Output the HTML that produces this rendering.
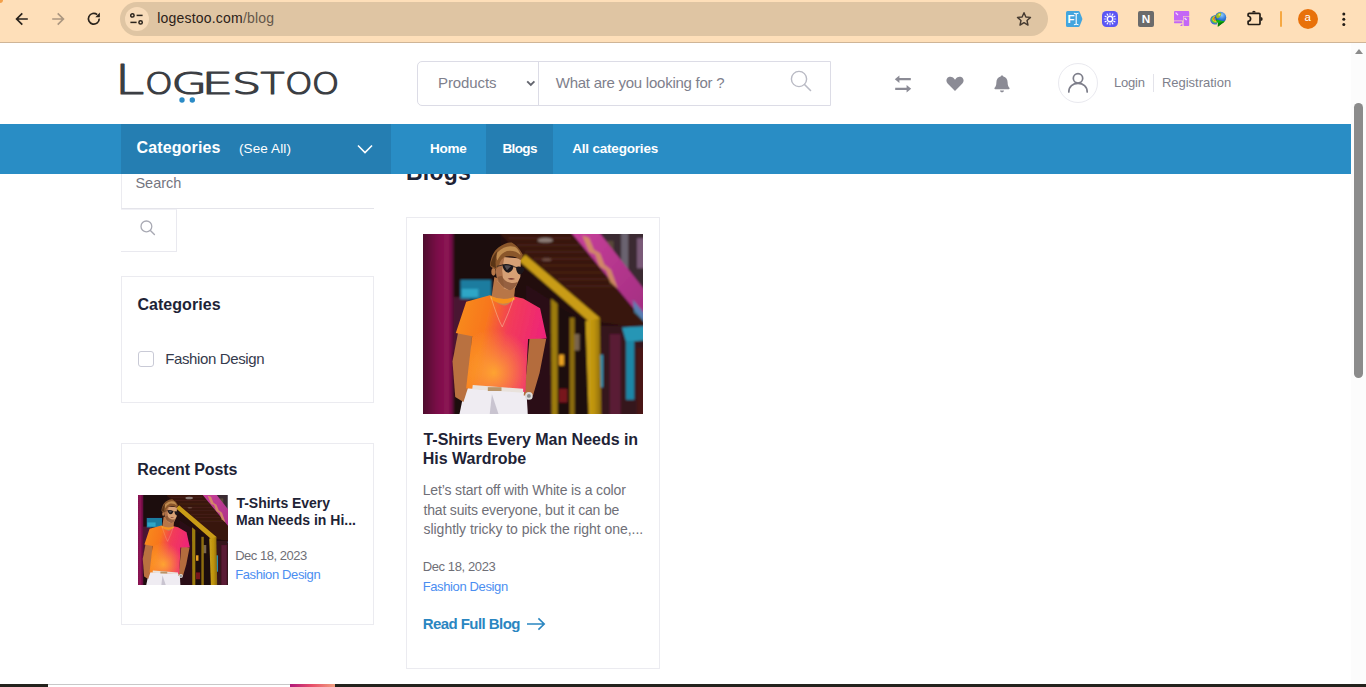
<!DOCTYPE html>
<html lang="en">
<head>
<meta charset="utf-8">
<title>Blogs - Logestoo</title>
<style>
*{box-sizing:border-box;margin:0;padding:0}
html,body{width:1366px;height:687px;overflow:hidden;background:#fff}
body{font-family:"Liberation Sans",sans-serif;color:#1e2336;position:relative}
svg{display:block;position:absolute;overflow:hidden}
.t{position:absolute;white-space:nowrap;line-height:1}
/* browser chrome */
#chrome{position:absolute;left:0;top:0;width:1366px;height:43px;background:#fedfb9;border-bottom:1px solid #cfb597}
#pill{position:absolute;left:120px;top:2px;width:928px;height:34px;border-radius:17px;background:#dfc5a3}
#pill .ic{position:absolute;left:5px;top:5px;width:24px;height:24px;border-radius:12px;background:#f8dcba}
#url{left:37px;top:9px;font-size:14px;color:#2b2118}
#url span{color:#65574a}
/* page */
#page{position:absolute;left:0;top:43px;width:1351px;height:641px;background:#fff;overflow:hidden}
#sb{position:absolute;left:1351px;top:43px;width:15px;height:641px;background:#fcfcfc}
#sb .th{position:absolute;left:3px;top:60px;width:9px;height:275px;border-radius:5px;background:#8b8b8b}
#sb .up{position:absolute;left:3.5px;top:6px;width:0;height:0;border-left:4.5px solid transparent;border-right:4.5px solid transparent;border-bottom:5px solid #8b8b8b}
/* header */
#sbox{position:absolute;left:417px;top:18px;width:414px;height:45px;border:1px solid #dcdce6;border-radius:5px 0 0 5px}
#sbox .dv{position:absolute;left:120px;top:0;width:1px;height:43px;background:#dcdce6}
.g{color:#7e808c}
#ucirc{position:absolute;left:1058px;top:20px;width:40px;height:40px;border-radius:20px;border:1px solid #e9e9ef}
/* nav */
#nav{position:absolute;left:0;top:81px;width:1351px;height:50px;background:#298dc5}
#nav .cat{position:absolute;left:121px;top:0;width:270px;height:50px;background:#257eb2}
#nav .act{position:absolute;left:486px;top:0;width:67px;height:50px;background:#257eb2}
#nav .t{color:#fff;font-weight:bold}
/* content */
.card{position:absolute;border:1px solid #ebebf0;background:#fff}
.h{font-weight:bold;color:#1e2336}
.blue{color:#4b8ef1}
.dt{color:#6f6f77}
/*FIT*/
#n1{left:136.48px;top:15.86px;font-size:16px;letter-spacing:0.140px}
#n2{left:238.98px;top:17.97px;font-size:13.5px;letter-spacing:0.113px}
#n3{left:429.96px;top:17.67px;font-size:13.5px;letter-spacing:-0.240px}
#n4{left:502.50px;top:17.67px;font-size:13.5px;letter-spacing:-0.630px}
#n5{left:572.22px;top:17.67px;font-size:13.5px;letter-spacing:-0.194px}
#h1{left:19.96px;top:13.10px;font-size:15px;letter-spacing:-0.077px}
#h2{left:137.78px;top:13.10px;font-size:15px;letter-spacing:-0.252px}
#h3{left:1113.98px;top:33.30px;font-size:13px;letter-spacing:-0.180px}
#h4{left:1161.94px;top:33.30px;font-size:13px;letter-spacing:-0.016px}
#c0{left:406.00px;top:118.23px;font-size:23px;letter-spacing:0.200px}
#c1{left:135.46px;top:132.63px;font-size:14.5px;letter-spacing:0.000px}
#c2{left:137.48px;top:253.86px;font-size:16px;letter-spacing:0.040px}
#c3{left:165.20px;top:308.10px;font-size:15px;letter-spacing:-0.374px}
#c4{left:137.20px;top:418.86px;font-size:16px;letter-spacing:-0.098px}
#c5{left:236.54px;top:453.15px;font-size:14px;letter-spacing:-0.055px}
#c6{left:236.00px;top:469.95px;font-size:14px;letter-spacing:0.011px}
#c7{left:235.20px;top:506.20px;font-size:13px;letter-spacing:-0.491px}
#c8{left:235.20px;top:524.60px;font-size:13px;letter-spacing:-0.374px}
#c9{left:423.50px;top:388.66px;font-size:16px;letter-spacing:-0.021px}
#c10{left:422.70px;top:407.66px;font-size:16px;letter-spacing:0.000px}
#c11{left:422.70px;top:439.75px;font-size:14px;letter-spacing:-0.135px}
#c12{left:423.50px;top:459.65px;font-size:14px;letter-spacing:-0.175px}
#c13{left:423.50px;top:478.85px;font-size:14px;letter-spacing:-0.032px}
#c14{left:422.70px;top:517.10px;font-size:13px;letter-spacing:-0.393px}
#c15{left:422.70px;top:537.30px;font-size:13px;letter-spacing:-0.374px}
#c16{left:422.70px;top:573.40px;font-size:15px;letter-spacing:-0.554px}
#url{left:37.22px;top:9.15px;font-size:14px;letter-spacing:0.203px}
/*ENDFIT*/
#bottom{position:absolute;left:0;top:684px;width:1366px;height:3px;background:#23231d}
</style>
</head>
<body>
<svg width="0" height="0" style="left:0;top:0"><defs>
  <linearGradient id="pg1" x1="0" x2="1" y1="0" y2="0"><stop offset="0" stop-color="#3f0724"/><stop offset=".55" stop-color="#7c0f49"/><stop offset=".85" stop-color="#8d1355"/><stop offset="1" stop-color="#5a0a36"/></linearGradient>
  <linearGradient id="pg2" x1="0" x2="1" y1="0" y2="0.25"><stop offset="0" stop-color="#f78f1e"/><stop offset=".38" stop-color="#f8761f"/><stop offset=".62" stop-color="#f23c58"/><stop offset="1" stop-color="#ee2478"/></linearGradient>
  <radialGradient id="pg3" cx=".42" cy=".8" r=".45"><stop offset="0" stop-color="#ffae2e" stop-opacity=".9"/><stop offset="1" stop-color="#ffae2e" stop-opacity="0"/></radialGradient>
  <linearGradient id="pg4" x1="0" x2="1" y1="0" y2="1"><stop offset="0" stop-color="#c8409a"/><stop offset="1" stop-color="#a02c80"/></linearGradient>
  <linearGradient id="pg5" x1="0" x2="1" y1="0" y2="0"><stop offset="0" stop-color="#cda414"/><stop offset=".55" stop-color="#bd9210"/><stop offset="1" stop-color="#8a6a0a"/></linearGradient>
  <filter id="pb" x="-5%" y="-5%" width="110%" height="110%"><feGaussianBlur stdDeviation="2.2"/></filter>
  <filter id="pb2" x="-5%" y="-5%" width="110%" height="110%"><feGaussianBlur stdDeviation="3"/></filter>
  <filter id="pb3" x="-5%" y="-5%" width="110%" height="110%"><feGaussianBlur stdDeviation="4.5"/></filter>
  <clipPath id="pc"><rect x="0" y="0" width="220" height="180"/></clipPath>
  <g id="photo" clip-path="url(#pc)"><rect x="0" y="0" width="220" height="180" fill="#23090f"/>
  <g transform="scale(0.27382) translate(-18.3,-14.6)" filter="url(#pb3)">
    <rect x="-40" y="-40" width="920" height="770" fill="#23090f"/>
    <!-- upper right building -->
    <polygon points="640,0 840,0 840,260" fill="#3b2a33"/>
    <rect x="742" y="10" width="26" height="175" fill="#6a6470"/><rect x="690" y="40" width="24" height="60" fill="#5a4a38"/><rect x="800" y="30" width="30" height="110" fill="#7a5a78"/>
    <!-- soffit -->
    <polygon points="285,0 565,0 840,330 840,360 650,335 385,100" fill="#37170f"/>
    <g stroke="#55281a" stroke-width="5" opacity=".8"><path d="M330 30 L560 30"/><path d="M360 55 L590 55"/><path d="M390 80 L610 80"/><path d="M420 105 L635 105"/><path d="M450 130 L655 130"/><path d="M480 155 L680 155"/><path d="M510 180 L700 180"/><path d="M540 205 L720 205"/></g>
    <ellipse cx="465" cy="37" rx="28" ry="9" fill="#8a7a74"/><ellipse cx="470" cy="108" rx="18" ry="6" fill="#6a4a40"/>
    <!-- pink fascia -->
    <polygon points="552,0 655,0 840,235 840,350" fill="url(#pg4)"/>
    <g fill="#d9a05a" opacity=".75"><polygon points="600,20 625,28 650,90 625,80"/><polygon points="640,70 665,85 690,150 662,132"/><polygon points="680,125 705,145 730,215 702,192"/></g>
    <polygon points="785,255 840,320 840,350 790,300" fill="#3aa0c8" opacity=".7"/>
    <!-- far right -->
    <rect x="668" y="350" width="172" height="340" fill="#35121c"/>
    <rect x="700" y="380" width="40" height="300" fill="#5a1a34"/>
    <polygon points="745,356 840,350 840,402 760,408" fill="#2596b5"/>
    <rect x="760" y="405" width="30" height="215" fill="#1f86a6"/><rect x="662" y="455" width="14" height="120" fill="#2a8eb0"/>
    <rect x="800" y="430" width="40" height="250" fill="#4a1418"/>
    <!-- interior glass -->
    <polygon points="395,200 490,260 490,690 395,690" fill="#2a0c14"/>
    <polygon points="512,280 615,335 620,690 512,690" fill="#1c0d0e"/>
    <rect x="560" y="380" width="30" height="60" fill="#b8a07a" opacity=".6"/><rect x="515" y="455" width="18" height="40" fill="#e8a020"/><rect x="515" y="580" width="30" height="50" fill="#a01a20" opacity=".7"/>
    <!-- yellow frame -->
    <polygon points="368,112 392,90 665,322 640,348" fill="#c99c14"/>
    <polygon points="612,332 664,322 670,690 624,690" fill="url(#pg5)"/>
    <polygon points="486,250 510,270 510,690 488,690" fill="#9c7c10"/>
    <rect x="554" y="320" width="18" height="370" fill="#8c6c0c"/>
    <!-- left pillar and dark gap -->
    <rect x="128" y="0" width="175" height="690" fill="#1d0810"/>
    <rect x="128" y="245" width="60" height="200" fill="#4a1830"/>
    <rect x="155" y="182" width="112" height="70" fill="#1c7c9f"/><rect x="160" y="215" width="60" height="30" fill="#2fa6c6"/>
    <rect x="0" y="0" width="130" height="690" fill="url(#pg1)"/>
  </g>
  <g transform="scale(0.27382) translate(-18.3,-14.6)" filter="url(#pb)">
    <!-- pants -->
    <polygon points="172,572 396,586 402,690 148,690" fill="#efecf2"/>
    <polygon points="270,600 300,690 260,690" fill="#c9c4d0"/>
    <!-- arms -->
    <polygon points="148,365 198,378 188,560 166,628 136,610 126,480" fill="#b9713f"/>
    <polygon points="408,388 468,398 444,522 420,604 386,604 398,500" fill="#b46c3d"/>
    <!-- shirt -->
    <path d="M262 238 L176 262 L138 376 L198 388 L176 578 L392 592 L402 398 L470 396 L446 286 L384 250 L352 243 L300 250 Z" fill="url(#pg2)"/>
    <path d="M262 238 L176 262 L138 376 L198 388 L176 578 L392 592 L402 398 L470 396 L446 286 L384 250 L352 243 L300 250 Z" fill="url(#pg3)"/>
    <polygon points="200,566 384,580 384,594 198,582" fill="#e9e2dc"/><rect x="255" y="574" width="50" height="14" fill="#b89468"/>
    <circle cx="405" cy="606" r="14" fill="#dcdcdc"/><circle cx="405" cy="606" r="7" fill="#8a8a8a"/>
  </g>
  <g transform="translate(47,2) scale(0.13678)" filter="url(#pb2)">
    <path d="M178 300 L158 445 Q235 520 322 452 L332 360 Z" fill="#b87646"/>
    <path d="M158 445 Q235 470 322 452 Q280 520 235 505 Q190 495 158 445 Z" fill="#c98252"/>
    <path d="M150 436 Q235 480 322 446 L330 462 Q240 530 146 456 Z" fill="#f7931e"/>
    <path d="M152 442 Q200 600 236 664 Q285 560 320 452" fill="none" stroke="#f3e3bd" stroke-width="4" opacity=".75"/>
    <path d="M205 150 L372 165 L368 300 L332 376 L290 398 L248 384 L200 330 L188 235 Z" fill="#d7a074"/>
    <path d="M205 150 L250 160 L235 250 L250 384 L200 330 L188 235 Z" fill="#ad7048"/>
    <path d="M200 300 Q215 370 290 398 Q335 385 350 335 Q320 350 290 340 Q250 330 232 290 Z" fill="#8a5636" opacity=".85"/>
    <path d="M275 312 Q300 300 330 314 Q300 326 275 312 Z" fill="#7a3a30"/>
    <ellipse cx="172" cy="262" rx="16" ry="28" fill="#b87848"/>
    <path d="M146 218 Q150 130 210 82 Q270 40 305 48 Q350 70 386 136 Q378 172 368 176 Q330 140 262 150 Q222 168 214 210 Q200 240 190 240 Q160 240 146 218 Z" fill="#8a572c"/>
    <path d="M200 120 Q260 60 330 80 Q360 100 370 140 Q330 100 270 110 Q220 130 200 180 Q190 150 200 120 Z" fill="#c08c50"/>
    <path d="M150 215 Q160 150 200 110 Q180 170 190 235 Z" fill="#5a3418"/>
    <path d="M236 208 Q280 200 318 218 Q316 262 280 268 Q244 262 236 208 Z" fill="#1c161a"/>
    <path d="M336 226 Q370 218 398 236 Q394 276 364 282 Q338 272 336 226 Z" fill="#1c161a"/>
    <path d="M196 222 L240 212 M316 222 L338 230" stroke="#3a2a22" stroke-width="7"/>
    <path d="M250 216 Q280 210 300 222 L270 250 Z" fill="#6a6266" opacity=".7"/>
  </g>
  </g>
  </defs></svg>
<div id="page">
  <div class="t h" id="c0">Blogs</div>
  <!-- sidebar search -->
  <div style="position:absolute;left:121px;top:131px;width:253px;height:35px;border-left:1px solid #ebebf0;border-bottom:1px solid #e4e4ea"></div>
  <div class="t" id="c1" style="color:#74757f">Search</div>
  <div style="position:absolute;left:121px;top:166px;width:56px;height:43px;border-top:1px solid #f1f1f6;border-right:1px solid #e9e9ef;border-bottom:1px solid #e9e9ef"></div>
  <svg style="left:139px;top:176.2px" width="18" height="18" viewBox="0 0 18 18"><circle cx="7.4" cy="7.4" r="5.4" fill="none" stroke="#a9aab4" stroke-width="1.3"/><path d="M11.4 11.4 L15.4 15.4" stroke="#a9aab4" stroke-width="1.4" stroke-linecap="round"/></svg>
  <!-- categories card -->
  <div class="card" style="left:121px;top:233px;width:253px;height:127px"></div>
  <div class="t h" id="c2">Categories</div>
  <div style="position:absolute;left:138px;top:308px;width:16px;height:16px;border:1px solid #c9cad6;border-radius:3px"></div>
  <div class="t" id="c3" style="color:#353a4c">Fashion Design</div>
  <!-- recent posts card -->
  <div class="card" style="left:121px;top:400px;width:253px;height:182px"></div>
  <div class="t h" id="c4">Recent Posts</div>
  <svg style="left:138px;top:452px" width="90" height="90" viewBox="20 0 180 180"><use href="#photo"/></svg>
  <div class="t h" id="c5">T-Shirts Every</div>
  <div class="t h" id="c6">Man Needs in Hi...</div>
  <div class="t dt" id="c7">Dec 18, 2023</div>
  <div class="t blue" id="c8">Fashion Design</div>
  <!-- blog card -->
  <div class="card" style="left:406px;top:174px;width:254px;height:452px"></div>
  <svg style="left:423px;top:191px" width="220" height="180" viewBox="0 0 220 180"><use href="#photo"/></svg>
  <div class="t h" id="c9">T-Shirts Every Man Needs in</div>
  <div class="t h" id="c10">His Wardrobe</div>
  <div class="t dt" id="c11">Let’s start off with White is a color</div>
  <div class="t dt" id="c12">that suits everyone, but it can be</div>
  <div class="t dt" id="c13">slightly tricky to pick the right one,...</div>
  <div class="t dt" id="c14">Dec 18, 2023</div>
  <div class="t blue" id="c15">Fashion Design</div>
  <div class="t" id="c16" style="font-weight:bold;color:#2a86c1">Read Full Blog</div>
  <svg style="left:526px;top:574px" width="20" height="14" viewBox="0 0 20 14"><path d="M1 7 L18.2 7 M12.4 1.4 L18.2 7 L12.4 12.6" fill="none" stroke="#2a86c1" stroke-width="1.6"/></svg>
  <svg id="logo" style="left:115px;top:12px" width="230" height="56" viewBox="115 55 230 56">
    <text font-family="'DejaVu Sans','Liberation Sans',sans-serif" font-weight="200" fill="#3b3e43" stroke="#3b3e43" stroke-width="1.2" stroke-linejoin="round" y="94.4"><tspan x="114.8" font-size="41.6" textLength="29.6" lengthAdjust="spacingAndGlyphs">L</tspan><tspan x="145" font-size="30.4" textLength="27.8" lengthAdjust="spacingAndGlyphs">O</tspan><tspan x="171.5" font-size="30.4" textLength="35.6" lengthAdjust="spacingAndGlyphs">G</tspan><tspan x="201.4" font-size="30.4" textLength="31.7" lengthAdjust="spacingAndGlyphs">E</tspan><tspan x="231.9" font-size="30.4" textLength="29.3" lengthAdjust="spacingAndGlyphs">S</tspan><tspan x="260.4" font-size="30.4" textLength="24" lengthAdjust="spacingAndGlyphs">T</tspan><tspan x="285" font-size="30.4" textLength="27.6" lengthAdjust="spacingAndGlyphs">O</tspan><tspan x="311.8" font-size="30.4" textLength="27.6" lengthAdjust="spacingAndGlyphs">O</tspan></text>
    <circle cx="182" cy="100" r="2.7" fill="#2b8bc6"/><circle cx="192.3" cy="100" r="2.7" fill="#2b8bc6"/>
  </svg>
  <div id="sbox"><div class="dv"></div>
    <div class="t g" id="h1">Products</div>
    <svg style="left:107.5px;top:17.5px" width="10" height="8" viewBox="0 0 10 8"><path d="M1.2 1.4 L4.8 5 L8.4 1.4" fill="none" stroke="#64666f" stroke-width="1.9"/></svg>
    <div class="t g" id="h2">What are you looking for ?</div>
    <svg style="left:371.2px;top:7.4px" width="24" height="24" viewBox="0 0 24 24"><circle cx="10" cy="10" r="7.6" fill="none" stroke="#b9bac4" stroke-width="1.4"/><path d="M15.5 15.5 L21.5 21.5" stroke="#b9bac4" stroke-width="1.6" stroke-linecap="round"/></svg>
  </div>
  <svg style="left:894px;top:32px" width="18" height="18" viewBox="0 0 18 18" fill="#8b8b95"><path d="M5.4 0.4 L5.4 3.1 L16.8 3.1 L16.8 5.3 L5.4 5.3 L5.4 8 L0.8 4.2 Z"/><path d="M12.6 10 L12.6 12.7 L1.2 12.7 L1.2 14.9 L12.6 14.9 L12.6 17.6 L17.2 13.8 Z"/></svg>
  <svg style="left:946px;top:33px" width="18" height="16" viewBox="0 0 18 16" fill="#8b8b95"><path d="M9 15 L1.6 7.6 C-0.4 5.4 0.2 2 2.8 1 C4.8 0.2 7 1 8 2.6 L9 3.8 L10 2.6 C11 1 13.2 0.2 15.2 1 C17.8 2 18.4 5.4 16.4 7.6 Z"/></svg>
  <svg style="left:994px;top:32px" width="16" height="18" viewBox="0 0 16 18" fill="#8b8b95"><path d="M8 0.4 C8.8 0.4 9.3 0.9 9.3 1.6 C12 2.2 13.6 4.4 13.6 7.2 C13.6 10.4 14.4 11.8 15.4 12.8 C15.8 13.3 15.5 14.2 14.8 14.2 L1.2 14.2 C0.5 14.2 0.2 13.3 0.6 12.8 C1.6 11.8 2.4 10.4 2.4 7.2 C2.4 4.4 4 2.2 6.7 1.6 C6.7 0.9 7.2 0.4 8 0.4 Z"/><path d="M6 15.4 L10 15.4 C10 16.5 9.1 17.2 8 17.2 C6.9 17.2 6 16.5 6 15.4 Z"/></svg>
  <div id="ucirc"></div>
  <svg style="left:1066px;top:28px" width="24" height="24" viewBox="0 0 24 24" fill="none" stroke="#7d7e8a" stroke-width="1.7" stroke-linecap="round"><circle cx="12" cy="7.3" r="4.7"/><path d="M2.8 21 C2.8 15.6 6.8 12.4 12 12.4 C17.2 12.4 21.2 15.6 21.2 21"/></svg>
  <div class="t g" id="h3">Login</div>
  <div style="position:absolute;left:1153px;top:31px;width:1px;height:18px;background:#e3e3ea"></div>
  <div class="t g" id="h4">Registration</div>
  <div id="nav">
    <div class="cat"></div><div class="act"></div>
    <div class="t" id="n1">Categories</div>
    <div class="t" id="n2" style="font-weight:normal">(See All)</div>
    <svg style="left:357px;top:20px" width="16" height="10" viewBox="0 0 16 10"><path d="M1 1.5 L8 8.5 L15 1.5" fill="none" stroke="#fff" stroke-width="1.6"/></svg>
    <div class="t" id="n3">Home</div>
    <div class="t" id="n4">Blogs</div>
    <div class="t" id="n5">All categories</div>
  </div>
</div>
<div id="sb"><div class="up"></div><div class="th"></div></div>
<div id="chrome">
  <div id="pill"><div class="ic"></div><div id="url" class="t">logestoo.com<span>/blog</span></div></div>
  <svg style="left:12px;top:9px" width="20" height="20" viewBox="0 0 20 20" fill="none" stroke="#2a231c" stroke-width="1.7"><path d="M15.8 10 L5 10 M10.3 4.3 L4.6 10 L10.3 15.7"/></svg>
  <svg style="left:48px;top:9px" width="20" height="20" viewBox="0 0 20 20" fill="none" stroke="#ac9780" stroke-width="1.7"><path d="M4.2 10 L15 10 M9.7 4.3 L15.4 10 L9.7 15.7"/></svg>
  <svg style="left:84px;top:9px" width="20" height="20" viewBox="0 0 20 20" fill="none" stroke="#2a231c" stroke-width="1.7"><path d="M15.2 9.6 A5.4 5.4 0 1 1 13.2 5.6"/><path d="M15.9 3.6 L15.9 8.2 L11.3 8.2 Z" fill="#2a231c" stroke="none"/></svg>
  <svg style="left:128px;top:10px" width="18" height="18" viewBox="0 0 18 18" fill="none" stroke="#2a231c" stroke-width="1.5"><circle cx="4.4" cy="5.4" r="1.7"/><path d="M8.6 5.4 L14.6 5.4"/><circle cx="12.6" cy="12.4" r="1.7"/><path d="M2.4 12.4 L8.6 12.4"/></svg>
  <svg style="left:1016px;top:11px" width="16" height="16" viewBox="0 0 18 18" fill="none" stroke="#453a30" stroke-width="1.6" stroke-linejoin="round"><path d="M9 1.9 L11.1 6.7 L16.3 7.2 L12.4 10.7 L13.5 15.8 L9 13.1 L4.5 15.8 L5.6 10.7 L1.7 7.2 L6.9 6.7 Z"/></svg>
  <svg style="left:1066px;top:11px" width="17" height="16" viewBox="0 0 17 16"><path d="M1.5 0 L12.4 0 Q13.3 0 13.7 .9 L16.2 7.2 Q16.5 8 16.2 8.8 L13.7 15.1 Q13.3 16 12.4 16 L1.5 16 Q0 16 0 14.5 L0 1.5 Q0 0 1.5 0 Z" fill="#43a5de"/><text x="1.4" y="12.3" font-family="'Liberation Sans',sans-serif" font-weight="bold" font-size="11.5" fill="#fff">F</text><path d="M10.2 3.2 L10.2 12.8 M7.9 2.2 Q10.2 2.4 10.2 3.6 Q10.2 2.4 12.5 2.2 M7.9 13.8 Q10.2 13.6 10.2 12.4 Q10.2 13.6 12.5 13.8" fill="none" stroke="#fff" stroke-width="1.1"/></svg>
  <svg style="left:1102px;top:11px" width="16" height="16" viewBox="0 0 16 16"><rect width="16" height="16" rx="4.5" fill="#5b56f4"/><circle cx="8" cy="8" r="2.7" fill="none" stroke="#fff" stroke-width="1.4"/><g stroke="#fff" stroke-width="1.2" stroke-linecap="round"><path d="M8 2.3 L8 3.6 M8 12.4 L8 13.7 M2.3 8 L3.6 8 M12.4 8 L13.7 8" opacity=".7"/><path d="M5.2 3.1 L5.8 4.2 M10.8 3.1 L10.2 4.2 M5.2 12.9 L5.8 11.8 M10.8 12.9 L10.2 11.8 M3.1 5.2 L4.2 5.8 M3.1 10.8 L4.2 10.2 M12.9 5.2 L11.8 5.8 M12.9 10.8 L11.8 10.2"/></g></svg>
  <svg style="left:1138px;top:11px" width="16" height="16" viewBox="0 0 16 16"><rect width="16" height="16" rx="2" fill="#6b6b6b"/><text x="3.7" y="12.3" font-family="'Liberation Sans',sans-serif" font-weight="bold" font-size="11.8" fill="#fff">N</text></svg>
  <svg style="left:1174px;top:11px" width="16" height="15" viewBox="0 0 16 15"><path d="M1 0 L14.2 0 Q15.2 0 15.2 1 L15.2 5.2 L9 5.2 L9 9.4 L0 9.4 L0 1 Q0 0 1 0 Z" fill="#c466f6"/><rect x="0" y="10.2" width="8.4" height="2" rx=".6" fill="#c466f6"/><path d="M6 15 L8.4 15 L8.4 12.6 Z" fill="#c466f6"/><rect x="9.6" y="5.8" width="5.6" height="9.2" rx=".8" fill="#c466f6"/><path d="M1.6 1.6 L4 4 M10.6 7 L12.6 9" stroke="#f3dcff" stroke-width="1.3"/></svg>
  <svg style="left:1209px;top:11px" width="18" height="17" viewBox="0 0 18 17"><defs><radialGradient id="gl" cx=".6" cy=".3" r=".8"><stop offset="0" stop-color="#8ec8f8"/><stop offset=".5" stop-color="#2f78d8"/><stop offset="1" stop-color="#143a7a"/></radialGradient></defs><path d="M6.4 4 Q1 5 1.2 9.4 Q2 13.6 7.6 13.6 L9.6 10 L5.8 8.4 Z" fill="#3b6fd6"/><path d="M6.2 4.4 Q2 5.6 2.2 9 Q3 12.4 7.6 12.4 L8.6 10 L5.4 8.6 Z" fill="#62c23c"/><path d="M6 5 Q3.2 6 3.4 8.6 Q4 11 7.4 11.2 L7.8 9.6 L5.2 8.6 Z" fill="#f0d21e"/><path d="M6 5.6 Q4.2 6.4 4.4 8.2 Q5 9.8 7 10 L5 8.4 Z" fill="#dc3a1e"/><circle cx="11.6" cy="6.4" r="5.6" fill="url(#gl)"/><path d="M7 4.4 Q8.6 1.6 11.6 1.4 Q13 2.6 11.8 4.4 Q10.8 6.6 8.6 7.4 Q6.8 6.6 7 4.4 Z" fill="#9fbf1e"/><path d="M9.6 3 Q11 2.2 11.6 3.4 Q10.8 4.8 9.6 4.6 Z" fill="#e8e86a"/><path d="M6.6 8.6 L15.8 10.4 L8.8 15.8 L9 12 Z" fill="#11b512"/><path d="M9 12 L15.8 10.4 L8.8 15.8 Z" fill="#0a7a0c"/></svg>
  <svg style="left:1246px;top:9px" width="18" height="18" viewBox="0 0 18 18" fill="none" stroke="#231d17" stroke-width="1.7" stroke-linejoin="round"><path d="M2.1 5.3 Q2.1 4.3 3.1 4.3 L13 4.3 Q14 4.3 14 5.3 L14 14.5 Q14 15.5 13 15.5 L3.1 15.5 Q2.1 15.5 2.1 14.5 L2.1 12.4 Q4.6 12 4.6 9.7 Q4.6 7.4 2.1 7 Z"/><path d="M6.1 3.6 A1.8 1.9 0 0 1 9.7 3.6 Z M14.7 7.9 A2 2 0 0 1 14.7 11.9 Z" fill="#231d17" stroke="none"/></svg>
  <div style="position:absolute;left:1280px;top:11px;width:2px;height:16px;border-radius:1px;background:#f6a842"></div>
  <div style="position:absolute;left:1298px;top:9px;width:20px;height:20px;border-radius:10px;background:#e8710a"></div>
  <div class="t" style="left:1304.5px;top:12px;font-size:11.5px;color:#fff">a</div>
  <svg style="left:1340px;top:10px" width="8" height="18" viewBox="0 0 8 18" fill="#231d17"><circle cx="3.8" cy="3.9" r="1.5"/><circle cx="3.8" cy="9.2" r="1.5"/><circle cx="3.8" cy="14.6" r="1.5"/></svg>
  <div style="position:absolute;left:0;top:0;width:3px;height:3px;border-radius:0 0 3px 0;background:#f3a04a"></div>
</div>
<div id="bottom"><div style="position:absolute;left:48px;top:0;width:242px;height:3px;background:#fff;border-top:1px solid #c8c8c8"></div><div style="position:absolute;left:290px;top:0;width:45px;height:3px;background:linear-gradient(90deg,#b0187a,#e8506a 50%,#f0a080)"></div></div>
</body>
</html>
